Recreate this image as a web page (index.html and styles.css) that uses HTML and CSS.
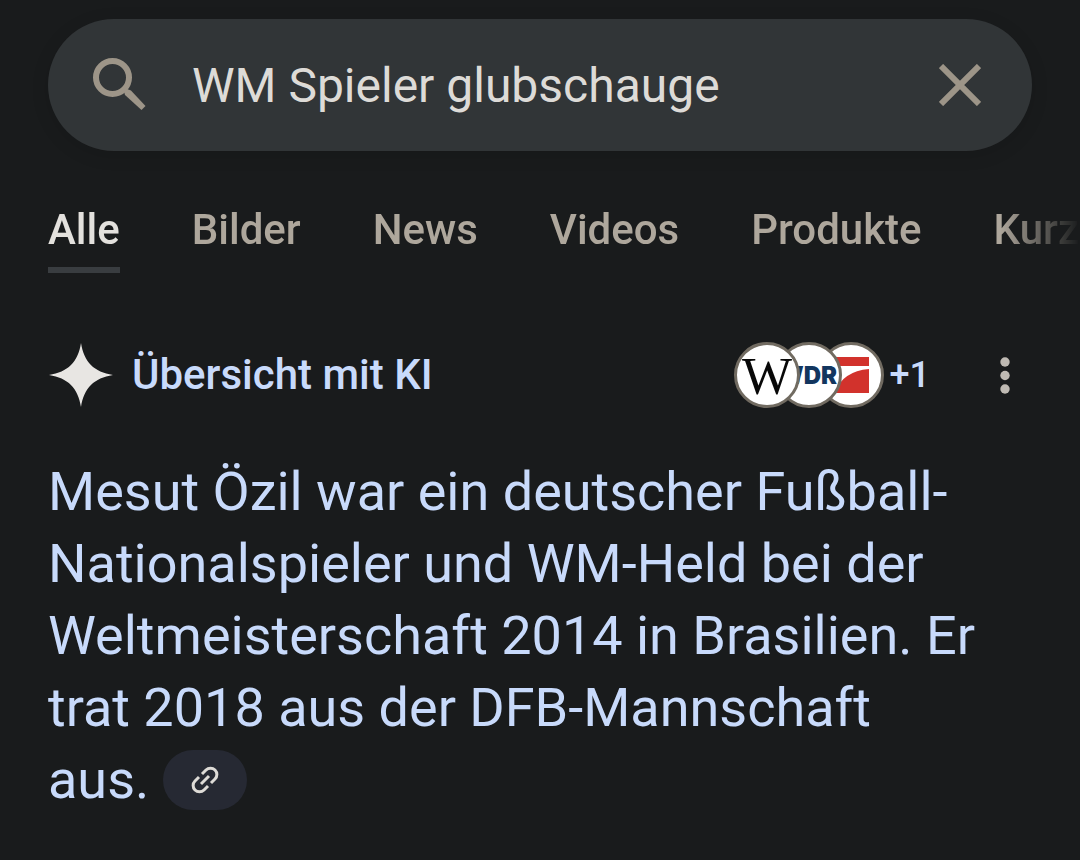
FILE: index.html
```html
<!DOCTYPE html>
<html lang="de">
<head>
<meta charset="utf-8">
<meta name="viewport" content="width=device-width, initial-scale=1">
<title>WM Spieler glubschauge</title>
<link rel="stylesheet" href="styles.css">
</head>
<body>
<header class="top">
  <form class="search" role="search">
    <button class="icon-button" type="submit" aria-label="Suchen">
      <svg width="54" height="54" viewBox="0 0 54 54" fill="none" stroke="currentColor"><circle cx="20.500" cy="19.500" r="16.500" stroke-width="6"/><path fill="currentColor" stroke="none" d="M33 37l-1-3.500 3-2.500 4 1.500 14.500 15.500-4 4z"/></svg>
    </button>
    <input class="query" type="text" value="WM Spieler glubschauge" aria-label="Suche">
    <button class="icon-button" type="reset" aria-label="Löschen">
      <svg width="42" height="42" viewBox="0 0 42 42" fill="none" stroke="currentColor" stroke-width="6"><path d="M2 2l38 38M40 2L2 40"/></svg>
    </button>
  </form>
</header>
<nav class="tabs" aria-label="Suchfilter">
  <a class="tab tab-active" href="#" aria-current="page">Alle</a>
  <a class="tab" href="#">Bilder</a>
  <a class="tab" href="#">News</a>
  <a class="tab" href="#">Videos</a>
  <a class="tab" href="#">Produkte</a>
  <a class="tab" href="#">Kurz</a>
</nav>
<main class="overview">
  <div class="overview-head">
    <svg class="spark" width="66" height="66" viewBox="0 0 66 66" fill="#e8e6e3"><path d="M33 1C36 20 46 30 65 33C46 36 36 46 33 65C30 46 20 36 1 33C20 30 30 20 33 1z"/></svg>
    <h1 class="title">Übersicht mit KI</h1>
    <button class="sources" type="button" aria-label="Quellen, 1 weitere">
      <span class="source source-front">
        <svg width="60" height="60" viewBox="0 0 60 60"><text class="logo-serif" x="30" y="49" text-anchor="middle">W</text></svg>
      </span>
      <span class="source source-middle">
        <svg width="60" height="60" viewBox="0 0 60 60"><text class="logo-black" x="58" y="39" text-anchor="end">WDR</text></svg>
      </span>
      <span class="source">
        <svg width="60" height="60" viewBox="0 0 60 60" fill="#d2322c"><path d="M13 12h35v9H13z"/><path d="M48 24v24H13Q22 26 48 24z"/></svg>
      </span>
      <span class="more">+1</span>
    </button>
    <button class="menu" type="button" aria-label="Weitere Optionen">
      <svg width="10" height="38" viewBox="0 0 10 38" fill="currentColor"><circle cx="5" cy="6" r="4.700"/><circle cx="5" cy="19.500" r="4.700"/><circle cx="5" cy="33" r="4.700"/></svg>
    </button>
  </div>
  <p class="answer">Mesut Özil war ein deutscher Fußball-Nationalspieler und WM-Held bei der Weltmeisterschaft 2014 in Brasilien. Er trat 2018 aus der DFB-Mannschaft <span class="keep">aus. <button class="link-chip" type="button" aria-label="Quelle anzeigen"><svg width="28" height="28" viewBox="0 0 28 28" fill="none" stroke="currentColor" stroke-width="3"><path d="M10 18l8-8M11 8l4-4a6 6 0 0 1 9 9l-4 4M17 20l-4 4a6 6 0 0 1-9-9l4-4"/></svg></button></span></p>
</main>
</body>
</html>
```

FILE: styles.css
```css
* { box-sizing: border-box; }
body {
  margin: 0;
  background: #191b1c;
  color: #c8dafb;
  font-family: Roboto, "Liberation Sans", sans-serif;
}
button {
  border: 0;
  padding: 0;
  background: none;
  color: inherit;
  font: inherit;
  cursor: pointer;
}
svg { display: block; flex: none; }
.top { padding: 19px 48px 0; }
.search {
  display: flex;
  align-items: center;
  height: 132px;
  padding: 0 51px 0 44px;
  border-radius: 66px;
  background: #313537;
  box-shadow: 0 4px 18px rgba(0, 0, 0, 0.12);
}
.icon-button { color: #9d9588; }
.query {
  flex: 1;
  min-width: 0;
  margin: 0 24px 0 46px;
  padding: 2px 0 0;
  border: 0;
  outline: 0;
  background: none;
  color: #dddbd7;
  font: 400 48px/60px Roboto, "Liberation Sans", sans-serif;
}
.tabs {
  display: flex;
  gap: 72px;
  padding: 49px 0 0 48px;
  overflow: hidden;
  -webkit-mask-image: linear-gradient(to left, transparent 0, #000 80px);
  mask-image: linear-gradient(to left, transparent 0, #000 80px);
}
.tab {
  flex: none;
  padding-bottom: 7px;
  border-bottom: 6px solid transparent;
  color: #aea79c;
  font-size: 42px;
  font-weight: 500;
  line-height: 60px;
  text-decoration: none;
}
.tab-active { color: #e3e1dd; border-color: #393d40; }
.overview { padding: 69px 48px 40px; }
.overview-head { display: flex; align-items: center; }
.title {
  flex: 1;
  margin: 0 0 0 18px;
  font-size: 42px;
  font-weight: 500;
  line-height: 60px;
}
.sources { display: flex; align-items: center; }
.source {
  position: relative;
  width: 66px;
  height: 66px;
  margin-right: -24px;
  border: 3px solid #716b61;
  border-radius: 50%;
  background: #fff;
  overflow: hidden;
}
.source-front { z-index: 2; }
.source-middle { z-index: 1; }
.logo-serif {
  fill: #080808;
  font: 400 53px "Liberation Serif", serif;
}
.logo-black {
  fill: #12365f;
  font: 900 24px Inter, sans-serif;
}
.more {
  margin-left: 30px;
  font-size: 36px;
  font-weight: 500;
}
.menu { margin: 0 22px 0 70px; color: #bfbab3; }
.answer {
  margin: 48px 0 0;
  font-size: 54px;
  line-height: 72px;
}
.keep { white-space: nowrap; }
.link-chip {
  display: inline-flex;
  align-items: center;
  justify-content: center;
  width: 84px;
  height: 60px;
  border-radius: 30px;
  background: #262933;
  color: #dedbd7;
  vertical-align: 4px;
}
```
